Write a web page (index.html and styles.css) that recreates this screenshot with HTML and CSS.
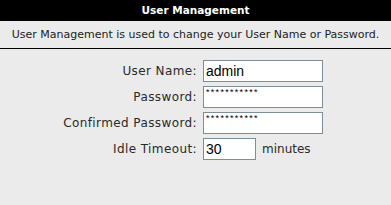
FILE: index.html
```html
<!DOCTYPE html>
<html>
<head>
<meta charset="utf-8">
<link rel="stylesheet" href="styles.css">
</head>
<body>
<div class="page">
  <div class="header">User Management</div>
  <div class="desc">User Management is used to change your User Name or Password.</div>
  <form class="form">
    <label class="label" for="un">User Name:</label>
    <div class="field"><input id="un" class="input wide" type="text" value="admin"></div>
    <label class="label" for="pw">Password:</label>
    <div class="field"><input id="pw" class="input wide pwd" type="text" value="***********"></div>
    <label class="label" for="cpw">Confirmed Password:</label>
    <div class="field"><input id="cpw" class="input wide pwd" type="text" value="***********"></div>
    <label class="label" for="it">Idle Timeout:</label>
    <div class="field"><input id="it" class="input short" type="text" value="30"><span class="unit">minutes</span></div>
  </form>
</div>
</body>
</html>
```
FILE: styles.css
```css
html, body {
  margin: 0;
  padding: 0;
  background: #ebebeb;
}
.page {
  width: 391px;
  height: 205px;
  background: #ebebeb;
  font-family: "DejaVu Sans", Verdana, sans-serif;
  color: #222;
}
.header {
  height: 21px;
  background: #000;
  color: #fff;
  font-weight: bold;
  font-size: 10.5px;
  line-height: 21px;
  text-align: center;
}
.desc {
  height: 27px;
  line-height: 27px;
  font-size: 11px;
  text-align: center;
  border-bottom: 1px solid #000;
  color: #222;
}
.form {
  margin: 11px 0 0 0;
  display: grid;
  grid-template-columns: 197px auto;
  column-gap: 6px;
  row-gap: 4px;
  align-items: center;
}
.label {
  text-align: right;
  font-size: 12px;
  letter-spacing: 0.4px;
  color: #2a2a2a;
}
.field {
  display: flex;
  align-items: center;
  gap: 6px;
  height: 22px;
}
.input {
  box-sizing: border-box;
  height: 22px;
  border: 1px solid #7f8c99;
  background: #fff;
  margin: 0;
  padding: 0 2px;
  font-family: "Liberation Sans", Arial, sans-serif;
  font-size: 14px;
  color: #000;
  outline: none;
}
.wide { width: 120px; }
.short { width: 53px; }
.pwd {
  font-size: 9px;
  letter-spacing: 1.3px;
  padding-bottom: 10px;
}
.unit {
  font-size: 12px;
  color: #2a2a2a;
}
```
